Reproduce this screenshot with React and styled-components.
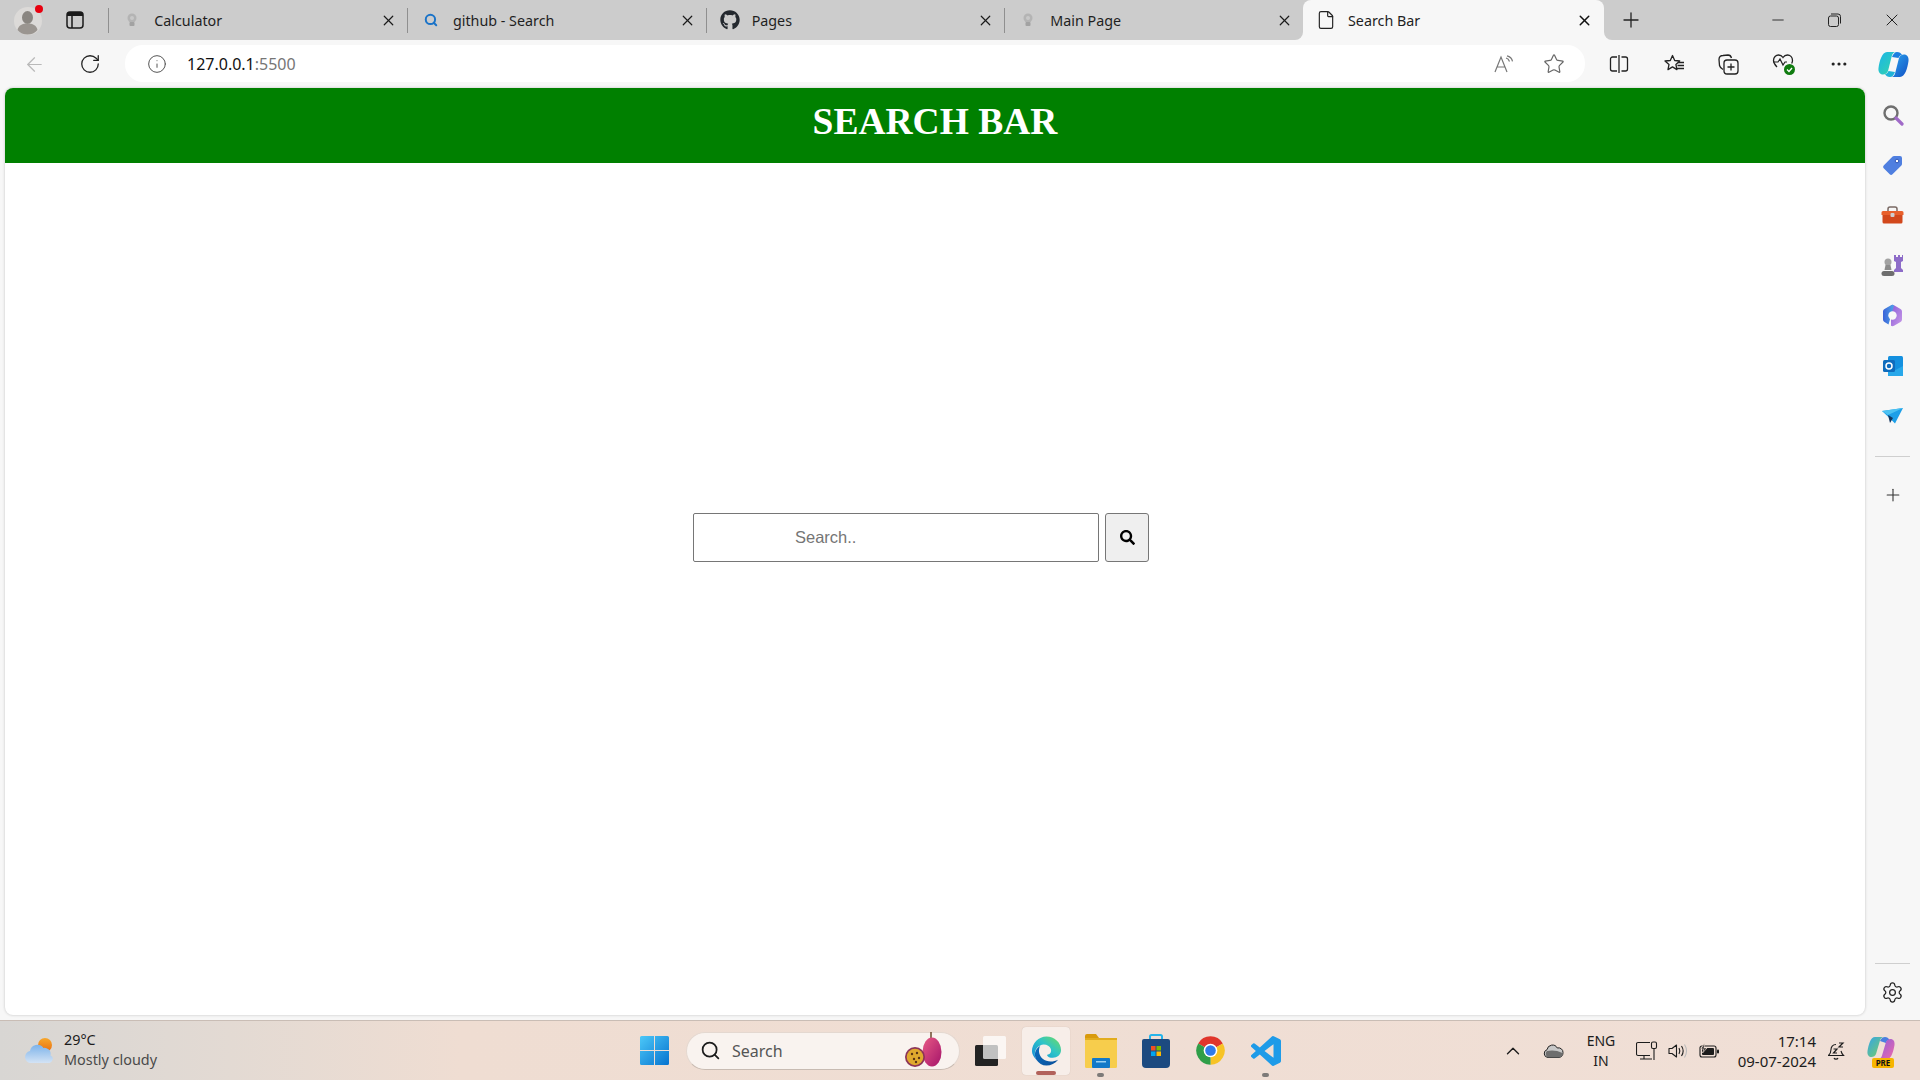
import React from 'react'
import styled, { createGlobalStyle } from 'styled-components'
import { X, Plus, Minus, ArrowLeft, RotateCw, Info, Star, File, Search, Settings, ChevronUp, Ellipsis } from 'lucide-react'
import { FaSearch, FaGithub } from 'react-icons/fa'

const GlobalStyle = createGlobalStyle`
  html, body { margin: 0; padding: 0; }
  body { font-family: "Noto Sans", "Open Sans", sans-serif; background: #f7f7f7; overflow: hidden; }
  * { box-sizing: border-box; }
`

const TABS = [
  { title: 'Calculator', icon: 'bulb' },
  { title: 'github - Search', icon: 'search' },
  { title: 'Pages', icon: 'github' },
  { title: 'Main Page', icon: 'bulb' },
]

const BulbIcon = () => (
  <svg width="10" height="14" viewBox="0 0 10 14">
    <circle cx="5" cy="5" r="4.5" fill="#b4b4b4" />
    <rect x="2.5" y="9" width="5" height="4" rx="1" fill="#a2a2a2" />
    <circle cx="5" cy="5" r="2" fill="#c8c8c8" />
  </svg>
)

const Avatar = () => (
  <svg width="32" height="34" viewBox="0 0 32 34">
    <circle cx="16" cy="18" r="14" fill="#dcdad8" />
    <ellipse cx="15.5" cy="14.5" rx="5.5" ry="6.5" fill="#8a8681" />
    <path d="M5.5 27c1-5 5-6.500 10-6.500s9 1.500 10 6.500c-2.500 3-6 4.500-10 4.500s-7.500-1.500-10-4.500z" fill="#9a9590" />
    <circle cx="27" cy="6" r="4" fill="#e8000f" />
  </svg>
)

const TabsIcon = () => (
  <svg width="18" height="18" viewBox="0 0 18 18" fill="none">
    <rect x="1" y="1" width="16" height="16" rx="3" stroke="#1a1a1a" strokeWidth="1.5" />
    <path d="M1 5V4a3 3 0 0 1 3-3h10a3 3 0 0 1 3 3v1z" fill="#1a1a1a" />
    <path d="M6 5v12" stroke="#1a1a1a" strokeWidth="1.5" />
  </svg>
)

const RestoreIcon = () => (
  <svg width="13" height="14" viewBox="0 0 13 14" fill="none" stroke="#222" strokeWidth="1">
    <rect x="0.5" y="3" width="10" height="10.5" rx="2" />
    <path d="M3 1h7a2.5 2.5 0 0 1 2.5 2.5v7" />
  </svg>
)

const ReadAloudIcon = () => (
  <svg width="20" height="18" viewBox="0 0 20 18" fill="none" stroke="#777" strokeWidth="1.2">
    <path d="M1 17L7 2l6 15M3.500 12h7" />
    <path d="M12 3c2 .5 3 2 3.500 3.500M13 .8c3 .7 5 3 5.500 5.500" />
  </svg>
)

const SplitIcon = () => (
  <svg width="20" height="20" viewBox="0 0 20 20" fill="none" stroke="#222" strokeWidth="1.3">
    <path d="M8 3H3.500A2 2 0 0 0 1.500 5v10a2 2 0 0 0 2 2H8M12.500 3H16.500a2 2 0 0 1 2 2v10a2 2 0 0 1-2 2h-4M10 1v18" />
  </svg>
)

const FavoritesIcon = () => (
  <svg width="21" height="20" viewBox="0 0 21 20" fill="none" stroke="#222" strokeWidth="1.3">
    <path d="M8.500 1.500l2.200 5 5 .5-3.800 3.400 1 5.200-4.400-2.700L4 15.600l1-5.200L1 7l5.300-.5z" strokeLinejoin="round" />
    <path d="M14 8.500h6M13.500 11.500h6.500M13 14.500h7" />
  </svg>
)

const CollectionsIcon = () => (
  <svg width="21" height="21" viewBox="0 0 21 21" fill="none" stroke="#222" strokeWidth="1.3">
    <path d="M5 15.500C3 14.500 2 13.500 1.500 11.500L1 5.500C1 3 2.500 1.500 5 1.500L10 1c2 0 3 1 3.500 3" />
    <rect x="6" y="6" width="14" height="14" rx="3" />
    <path d="M13 9.500v7M9.500 13h7" />
  </svg>
)

const HealthIcon = () => (
  <svg width="24" height="23" viewBox="0 0 24 23" fill="none">
    <path d="M5 14C2.500 11.500 1.500 9.500 1.500 7.500 1.500 4 4 2 6.500 2c2 0 3.500 1 4.500 2.500C12 3 13.500 2 15.500 2 18 2 20.500 4 20.500 7.500c0 1-.3 2-.8 3" stroke="#222" strokeWidth="1.3" />
    <path d="M1.500 9H6l2-3 3 6 2-3h2" stroke="#222" strokeWidth="1.2" />
    <circle cx="17.5" cy="16.5" r="5.5" fill="#107c10" />
    <path d="M15 16.500l2 2 3-3.500" stroke="#fff" strokeWidth="1.3" />
  </svg>
)

const CopilotMark = () => (
  <svg width="31" height="27" viewBox="0 0 31 27">
    <defs>
      <linearGradient id="cpA" x1="0" y1="0" x2="1" y2="1">
        <stop offset="0" stopColor="#1bb5e8" />
        <stop offset="1" stopColor="#35d6a8" />
      </linearGradient>
      <linearGradient id="cpB" x1="0" y1="0" x2="1" y2="1">
        <stop offset="0" stopColor="#2aa7f0" />
        <stop offset="1" stopColor="#1350c4" />
      </linearGradient>
    </defs>
    <path d="M14 6c1-3 3-5 5-5 2.500 0 4 1 5 3-2 0-3 1.500-3.500 3z" fill="#1b7fe0" />
    <path d="M17 21c-1 3-3 5-5 5-2.500 0-4-1-5-3 2 0 3-1.500 3.500-3z" fill="#1fb2d8" />
    <path d="M9 1h9c-2 0-3.500 1.500-4.200 4L10 20c-.7 2-2.500 3.500-5 3.500C2 23.500 0 21 .5 17 1.500 10 4 1 9 1z" fill="url(#cpA)" />
    <path d="M22 26h-9c2 0 3.500-1.500 4.200-4L21 7c.7-2 2.500-3.500 5-3.500 3 0 5 2.500 4.500 6.500C29.500 17 27 26 22 26z" fill="url(#cpB)" />
  </svg>
)

const MagnifierIcon = () => (
  <svg width="22" height="22" viewBox="0 0 22 22" fill="none">
    <circle cx="9" cy="9" r="6.5" stroke="#6f6f6f" strokeWidth="2.4" />
    <path d="M14 14l6 6" stroke="#a06ac8" strokeWidth="3.2" strokeLinecap="round" />
  </svg>
)

const TagIcon = () => (
  <svg width="21" height="21" viewBox="0 0 21 21">
    <path d="M12 1h6a2 2 0 0 1 2 2v6a2 2 0 0 1-.6 1.400L10.500 19.300a2 2 0 0 1-2.800 0L1.700 13.300a2 2 0 0 1 0-2.800L10.600 1.600A2 2 0 0 1 12 1z" fill="#4f7fe0" />
    <circle cx="15" cy="6" r="1.8" fill="#fff" stroke="#2f55b5" />
  </svg>
)

const ToolboxIcon = () => (
  <svg width="23" height="18" viewBox="0 0 23 18">
    <path d="M7 5V3a2 2 0 0 1 2-2h5a2 2 0 0 1 2 2v2" fill="none" stroke="#7a6a64" strokeWidth="1.5" />
    <path d="M2 5h19a1.500 1.500 0 0 1 1.500 1.500V9H.5V6.500A1.500 1.500 0 0 1 2 5z" fill="#e8602c" />
    <path d="M1.500 9h20v7a1.500 1.500 0 0 1-1.500 1.500H3A1.500 1.500 0 0 1 1.500 16z" fill="#d2481c" />
    <rect x="9.5" y="7" width="4" height="4" rx="1" fill="#cfcfcf" />
  </svg>
)

const ChessIcon = () => (
  <svg width="23" height="23" viewBox="0 0 23 23">
    <path d="M14 1h2v2h2V1h2v2h2v-2h1v6l-2 1v6l2 2v2h-9v-2l2-2V8l-2-1z" fill="#8d6cc8" transform="translate(-1 0)" />
    <circle cx="7" cy="8" r="3.5" fill="#a2a2a2" />
    <path d="M4.500 11h5l1 5h-7z" fill="#8b8b8b" />
    <rect x="0.5" y="17" width="13" height="5" rx="2.5" fill="#6e6e6e" />
  </svg>
)

const M365Icon = () => (
  <svg width="21" height="23" viewBox="0 0 21 23">
    <defs>
      <linearGradient id="msA" x1="0" y1="0" x2="1" y2="0">
        <stop offset="0" stopColor="#3b62d8" />
        <stop offset="1" stopColor="#4fa3e8" />
      </linearGradient>
      <linearGradient id="msB" x1="0" y1="0" x2="1" y2="1">
        <stop offset="0" stopColor="#8a5cd8" />
        <stop offset="1" stopColor="#c99ae8" />
      </linearGradient>
    </defs>
    <path d="M9 1.200a3 3 0 0 1 3 0l6.500 3.700A3 3 0 0 1 20 7.500v8a3 3 0 0 1-1.500 2.600L12 21.800a3 3 0 0 1-3 0" fill="url(#msB)" />
    <path d="M12 1.200a3 3 0 0 0-3 0L2.500 4.900A3 3 0 0 0 1 7.500v8a3 3 0 0 0 1.500 2.600l4 2.300z" fill="url(#msA)" />
    <circle cx="10.5" cy="11.5" r="4.2" fill="#f7f7f7" />
  </svg>
)

const OutlookIcon = () => (
  <svg width="20" height="20" viewBox="0 0 20 20">
    <rect x="5" y="0" width="15" height="20" rx="1.5" fill="#1490df" />
    <path d="M5 10l7.500 4 7.500-4v10H5z" fill="#28a8ea" />
    <rect x="0" y="4" width="12" height="12" rx="1.5" fill="#0f6cbd" />
    <circle cx="6" cy="10" r="3" fill="none" stroke="#fff" strokeWidth="1.5" />
  </svg>
)

const PlaneIcon = () => (
  <svg width="22" height="16" viewBox="0 0 22 16">
    <path d="M0 3l21-3-8 15.500-5-5z" fill="#1d9fe8" />
    <path d="M0 3l6 4 15-7z" fill="#4cc2f2" />
    <path d="M6 7l2 8 3-5z" fill="#12365f" />
  </svg>
)

const WeatherIcon = () => (
  <svg width="32" height="28" viewBox="0 0 32 28">
    <defs>
      <linearGradient id="wCloud" x1="0" y1="0" x2="0" y2="1">
        <stop offset="0" stopColor="#7db3ea" />
        <stop offset="1" stopColor="#d3e3f5" />
      </linearGradient>
      <linearGradient id="wSun" x1="0" y1="0" x2="0" y2="1">
        <stop offset="0" stopColor="#f7a72b" />
        <stop offset="1" stopColor="#e96e10" />
      </linearGradient>
    </defs>
    <circle cx="21" cy="8" r="7" fill="url(#wSun)" />
    <path d="M7 26a6 6 0 0 1-1-11.900A7.500 7.500 0 0 1 19.500 11a6 6 0 0 1 7 7.500c2.500 1 3 3.500 1.500 5.500-1 1.500-2 2-4 2z" fill="url(#wCloud)" />
  </svg>
)

const WindowsLogo = () => (
  <WindowsWrap>
    <svg width="29" height="29" viewBox="0 0 29 29">
      <defs>
        <linearGradient id="winG" x1="0" y1="0" x2="1" y2="1">
          <stop offset="0" stopColor="#4cc8f8" />
          <stop offset="1" stopColor="#0673cf" />
        </linearGradient>
      </defs>
      <path d="M0 1.500A1.500 1.500 0 0 1 1.500 0H14v14H0zM15 0h12.500A1.500 1.500 0 0 1 29 1.500V14H15zM0 15h14v14H1.500A1.500 1.500 0 0 1 0 27.500zM15 15h14v12.500a1.500 1.500 0 0 1-1.500 1.500H15z" fill="url(#winG)" />
    </svg>
  </WindowsWrap>
)

const FruitIcon = () => (
  <svg width="40" height="38" viewBox="0 0 40 38">
    <defs>
      <linearGradient id="frA" x1="0" y1="0" x2="1" y2="1">
        <stop offset="0" stopColor="#e85a85" />
        <stop offset="1" stopColor="#a5146a" />
      </linearGradient>
    </defs>
    <path d="M27 0v8" stroke="#6b4a2c" strokeWidth="1.5" />
    <ellipse cx="28" cy="20" rx="9.5" ry="14.5" fill="url(#frA)" />
    <circle cx="11" cy="25" r="10" fill="#8c3458" />
    <circle cx="11" cy="25" r="8.3" fill="#e0a92e" />
    <circle cx="8" cy="22" r="1.2" fill="#5b3414" />
    <circle cx="13" cy="21" r="1.2" fill="#5b3414" />
    <circle cx="15" cy="26" r="1.2" fill="#5b3414" />
    <circle cx="10" cy="27" r="1.2" fill="#5b3414" />
    <circle cx="12" cy="30" r="1.2" fill="#5b3414" />
  </svg>
)

const TaskViewIcon = () => (
  <svg width="31" height="30" viewBox="0 0 31 30">
    <rect x="0" y="9" width="23" height="21" rx="1.5" fill="#232323" />
    <rect x="8" y="0" width="23" height="23" rx="1.5" fill="#fff" fillOpacity="0.72" />
  </svg>
)

const EdgeIcon = () => (
  <svg width="31" height="32" viewBox="0 0 32 32">
    <defs>
      <linearGradient id="edA" x1="0" y1="1" x2="1" y2="0">
        <stop offset="0" stopColor="#0f88d8" />
        <stop offset="0.55" stopColor="#2fc4c8" />
        <stop offset="1" stopColor="#6fdc5e" />
      </linearGradient>
      <linearGradient id="edB" x1="0" y1="0" x2="1" y2="1">
        <stop offset="0" stopColor="#0b6fc0" />
        <stop offset="1" stopColor="#0a4f9a" />
      </linearGradient>
    </defs>
    <path d="M16 1c8 0 15 6 15 14 0 5-4 8-8.500 8-3 0-5.500-1-6-3 3-.5 5-2.500 4-6-1.500-4-7-6-11.500-3.500C4 13 2.500 19 5.500 25 2.500 22 1 19 1 16 1 8 8 1 16 1z" fill="url(#edA)" />
    <path d="M5.500 25C2.500 19 4.500 13.500 9.500 10.800 7.500 14 7.500 20 12 24c4.500 3.800 11 3.500 16 1-3 4-7.500 6-12 6-4.500 0-8-2.500-10.500-6z" fill="url(#edB)" />
  </svg>
)

const ExplorerIcon = () => (
  <svg width="32" height="34" viewBox="0 0 32 34">
    <path d="M0 2a2 2 0 0 1 2-2h9l3 4h-14z" fill="#d99a0c" />
    <rect x="0" y="4" width="32" height="30" rx="1.5" fill="#f7cd4c" />
    <rect x="0" y="4" width="32" height="2" fill="#e2ac1d" />
    <rect x="7" y="24" width="18" height="10" rx="1" fill="#1279c8" />
    <rect x="11" y="27" width="10" height="1.5" fill="#9ad1f2" />
  </svg>
)

const StoreIcon = () => (
  <svg width="28" height="34" viewBox="0 0 28 34">
    <path d="M8 6V2.500A1.500 1.500 0 0 1 9.500 1h9A1.500 1.500 0 0 1 20 2.500V6" fill="none" stroke="#25b4ea" strokeWidth="2" />
    <path d="M0 7a2 2 0 0 1 2-2h24a2 2 0 0 1 2 2v23a4 4 0 0 1-4 4H4a4 4 0 0 1-4-4z" fill="#1c4a80" />
    <rect x="9" y="12" width="4.5" height="4.5" fill="#f25022" />
    <rect x="14.5" y="12" width="4.5" height="4.5" fill="#7fba00" />
    <rect x="9" y="17.5" width="4.5" height="4.5" fill="#00a4ef" />
    <rect x="14.5" y="17.5" width="4.5" height="4.5" fill="#ffb900" />
  </svg>
)

const ChromeIcon = () => (
  <svg width="31" height="31" viewBox="0 0 24 24">
    <path d="M12 12L2.470 6.500A11 11 0 0 1 21.530 6.500z" fill="#e0352b" />
    <path d="M12 12L21.530 6.500A11 11 0 0 1 12 23z" fill="#f7c325" />
    <path d="M12 12L12 23A11 11 0 0 1 2.470 6.500z" fill="#2f9e48" />
    <circle cx="12" cy="12" r="5.3" fill="#fff" />
    <circle cx="12" cy="12" r="4.1" fill="#2f7bea" />
  </svg>
)

const VsCodeIcon = () => (
  <svg width="30" height="30" viewBox="0 0 24 24">
    <path d="M23.150 2.587L18.210.21a1.494 1.494 0 0 0-1.705.29l-9.460 8.630-4.120-3.128a.999.999 0 0 0-1.276.057L.327 7.261A1 1 0 0 0 .326 8.740L3.899 12 .326 15.260a1 1 0 0 0 .001 1.479L1.650 17.940a.999.999 0 0 0 1.276.057l4.120-3.128 9.460 8.630a1.492 1.492 0 0 0 1.704.29l4.942-2.377A1.500 1.500 0 0 0 24 20.060V3.939a1.500 1.500 0 0 0-.850-1.352zm-5.146 14.861L10.826 12l7.178-5.448v10.896z" fill="#1e9be8" />
  </svg>
)

const OneDriveIcon = () => (
  <svg width="21" height="15" viewBox="0 0 21 15">
    <path d="M5 14.500A4 4 0 0 1 4 6.700 5.500 5.500 0 0 1 14.300 5 4.500 4.500 0 0 1 20 9.500a5 5 0 0 1-4 5z" fill="#c8c8c8" stroke="#222" strokeWidth="1" />
    <path d="M5 14.500A4 4 0 0 1 4 8c4-1 10-1 15.500 2 .5 2-1 4.500-3.500 4.500z" fill="#6e6e6e" />
  </svg>
)

const MonitorIcon = () => (
  <svg width="22" height="20" viewBox="0 0 22 20" fill="none" stroke="#1c1c1c" strokeWidth="1.1">
    <path d="M14 1.500H2A1.500 1.500 0 0 0 .5 3v10A1.500 1.500 0 0 0 2 14.500h12M8 14.500v3M4 18h12" />
    <rect x="15.5" y="1" width="5" height="6.5" rx="1.5" />
    <path d="M18 7.500V19" />
  </svg>
)

const SpeakerIcon = () => (
  <svg width="20" height="16" viewBox="0 0 20 16" fill="none" stroke="#1c1c1c" strokeWidth="1.1">
    <path d="M1 5.500h3L8.500 2v12L4 10.500H1z" strokeLinejoin="round" />
    <path d="M11 5c1 1.800 1 4.200 0 6" />
    <path d="M13.500 3c2 3 2 7 0 10" />
    <path d="M16.500 1.500c2.500 4 2.500 9 0 13" stroke="#bbb" />
  </svg>
)

const BatteryIcon = () => (
  <svg width="20" height="16" viewBox="0 0 20 16">
    <rect x="1" y="3" width="16" height="11" rx="2" fill="none" stroke="#1c1c1c" strokeWidth="1.1" />
    <rect x="3" y="5" width="12" height="7" rx="1" fill="#1c1c1c" />
    <rect x="18" y="6.500" width="2" height="4" rx="1" fill="#1c1c1c" />
    <path d="M5.500 0L2 6h3l-1.500 4L8 5H5z" fill="#1c1c1c" stroke="#f0dfd6" strokeWidth="0.7" />
  </svg>
)

const BellIcon = () => (
  <svg width="17" height="20" viewBox="0 0 17 20" fill="none" stroke="#1c1c1c" strokeWidth="1.1">
    <path d="M8 3.500C4.500 3.500 3 6 3 8.500c0 3-1.500 5-2.500 6h15c-1-1-2-2.500-2.500-4.500" />
    <path d="M6 17c.5 1.500 3.500 1.500 4 0" />
    <path d="M5.500 8h3.500l-3.500 4h3.500M11 2h4l-4 4h4" strokeWidth="1.2" />
  </svg>
)

const CopilotPre = () => (
  <PreWrap>
    <svg width="28" height="24" viewBox="0 0 28 24">
      <defs>
        <linearGradient id="preA" x1="0" y1="0" x2="1" y2="1">
          <stop offset="0" stopColor="#33a5e8" />
          <stop offset="1" stopColor="#7cd05e" />
        </linearGradient>
        <linearGradient id="preB" x1="0" y1="0" x2="1" y2="1">
          <stop offset="0" stopColor="#8a5ce0" />
          <stop offset="1" stopColor="#f06aa8" />
        </linearGradient>
      </defs>
      <path d="M13 5c1-2.500 3-4 5-4 2 0 3.500 1 4.500 3-2 0-3 1-3.500 3z" fill="#4a7fe0" />
      <path d="M8 1h9c-2 0-3.500 1.500-4 3.500L9 18c-.7 2-2.500 3-4.500 3C2 21 0 19 .5 15 1.500 9 3.500 1 8 1z" fill="url(#preA)" />
      <path d="M20 23h-9c2 0 3.500-1.500 4-3.500L19 6c.7-2 2.500-3 4.500-3 2.500 0 4.500 2 4 6-1 6-3 14-7.500 14z" fill="url(#preB)" />
    </svg>
    <PreTag>PRE</PreTag>
  </PreWrap>
)

const App = () => {
  return (
    <Page>
      <GlobalStyle />

      <TabStrip>
        <StripLeft>
          <Slot $w={40}><Avatar /></Slot>
          <TabActions><TabsIcon /></TabActions>
          {TABS.map((tab) => (
            <Tab key={tab.title}>
              <TabDivider />
              <Favicon>
                {tab.icon === 'bulb' && <BulbIcon />}
                {tab.icon === 'search' && <Search size={14} color="#1a73c8" strokeWidth={3.4} />}
                {tab.icon === 'github' && <FaGithub size={20} color="#24292f" />}
              </Favicon>
              <TabTitle>{tab.title}</TabTitle>
              <X size={17} color="#1a1a1a" strokeWidth={1.7} />
            </Tab>
          ))}
        </StripLeft>
        <ActiveTab>
          <Favicon><File size={20} color="#222" strokeWidth={1.4} /></Favicon>
          <TabTitle>Search Bar</TabTitle>
          <X size={17} color="#111" strokeWidth={2.1} />
        </ActiveTab>
        <StripRight>
          <NewTab><Plus size={24} color="#222" strokeWidth={1.3} /></NewTab>
          <WindowControls>
            <Slot $w={57}><Minus size={18} color="#222" strokeWidth={1.2} /></Slot>
            <Slot $w={57}><RestoreIcon /></Slot>
            <Slot $w={57}><X size={20} color="#222" strokeWidth={1.2} /></Slot>
          </WindowControls>
        </StripRight>
      </TabStrip>

      <Toolbar>
        <Slot $w={55}><ArrowLeft size={23} color="#b9b9b9" strokeWidth={1.3} /></Slot>
        <Slot $w={55}><RotateCw size={22} color="#222" strokeWidth={1.4} /></Slot>
        <AddressBar>
          <Info size={20} color="#555" strokeWidth={1.2} />
          <Url>127.0.0.1<UrlPort>:5500</UrlPort></Url>
          <Slot $w={50}><ReadAloudIcon /></Slot>
          <Slot $w={50}><Star size={22} color="#666" strokeWidth={1.3} /></Slot>
        </AddressBar>
        <ToolbarIcons>
          <Slot $w={54.8}><SplitIcon /></Slot>
          <Slot $w={54.8}><FavoritesIcon /></Slot>
          <Slot $w={54.8}><CollectionsIcon /></Slot>
          <Slot $w={54.8}><HealthIcon /></Slot>
          <Slot $w={54.8}><Ellipsis size={20} color="#222" strokeWidth={1.8} /></Slot>
          <Slot $w={54.8}><CopilotMark /></Slot>
        </ToolbarIcons>
      </Toolbar>

      <Middle>
        <Content>
          <Header><Title>SEARCH BAR</Title></Header>
          <SearchRow>
            <SearchInput type="text" placeholder="Search.." />
            <SearchButton type="button"><FaSearch size={15} color="#000" /></SearchButton>
          </SearchRow>
        </Content>
        <Sidebar>
          <SideItem><MagnifierIcon /></SideItem>
          <SideItem><TagIcon /></SideItem>
          <SideItem><ToolboxIcon /></SideItem>
          <SideItem><ChessIcon /></SideItem>
          <SideItem><M365Icon /></SideItem>
          <SideItem><OutlookIcon /></SideItem>
          <SideItem><PlaneIcon /></SideItem>
          <SideDivider />
          <SideAdd><Plus size={20} color="#333" strokeWidth={1.3} /></SideAdd>
          <SideBottom>
            <SideDivider />
            <SideSettings><Settings size={23} color="#222" strokeWidth={1.3} /></SideSettings>
          </SideBottom>
        </Sidebar>
      </Middle>

      <Taskbar>
        <Weather>
          <WeatherIcon />
          <WeatherText>
            <span>29°C</span>
            <WeatherSub>Mostly cloudy</WeatherSub>
          </WeatherText>
        </Weather>
        <WindowsLogo />
        <TaskSearch>
          <Search size={21} color="#1c1c1c" strokeWidth={2} />
          <TaskSearchLabel>Search</TaskSearchLabel>
          <FruitIcon />
        </TaskSearch>
        <TaskView><TaskViewIcon /></TaskView>
        <EdgeTile><EdgeIcon /><ActiveBar /></EdgeTile>
        <AppSlot><ExplorerIcon /><OpenDot /></AppSlot>
        <AppSlot><StoreIcon /></AppSlot>
        <AppSlot><ChromeIcon /></AppSlot>
        <AppSlot><VsCodeIcon /><OpenDot /></AppSlot>
        <Tray>
          <Slot $w={46}><ChevronUp size={22} color="#1c1c1c" strokeWidth={1.5} /></Slot>
          <Slot $w={34}><OneDriveIcon /></Slot>
          <Lang><span>ENG</span><span>IN</span></Lang>
          <Slot $w={31}><MonitorIcon /></Slot>
          <Slot $w={31}><SpeakerIcon /></Slot>
          <Slot $w={31}><BatteryIcon /></Slot>
          <Clock><span>17:14</span><span>09-07-2024</span></Clock>
          <Slot $w={40}><BellIcon /></Slot>
          <Slot $w={50}><CopilotPre /></Slot>
        </Tray>
      </Taskbar>
    </Page>
  )
}

export default App

const Page = styled.div`
  width: 1920px;
  height: 1080px;
  display: flex;
  flex-direction: column;
  background: #f7f7f7;
  overflow: hidden;
`

const Slot = styled.div`
  width: ${(p) => p.$w}px;
  height: 100%;
  flex: none;
  display: flex;
  align-items: center;
  justify-content: center;
`

const TabStrip = styled.div`
  height: 40px;
  flex: none;
  display: flex;
  background: linear-gradient(#cccccc 50%, #f7f7f7 50%);
`

const StripLeft = styled.div`
  width: 1303px;
  flex: none;
  display: flex;
  align-items: center;
  padding-left: 8px;
  background: #cccccc;
  border-bottom-right-radius: 8px;
`

const TabActions = styled.div`
  width: 54px;
  height: 100%;
  margin-right: 7px;
  display: flex;
  align-items: center;
  justify-content: center;
`

const Tab = styled.div`
  width: 298.7px;
  height: 100%;
  flex: none;
  display: flex;
  align-items: center;
  padding-right: 10px;
`

const TabDivider = styled.div`
  width: 1px;
  height: 25px;
  flex: none;
  background: #8f8f8f;
`

const Favicon = styled.div`
  width: 22px;
  margin-left: 12px;
  flex: none;
  display: flex;
  justify-content: center;
`

const TabTitle = styled.div`
  flex: 1;
  margin-left: 11px;
  font-size: 14.3px;
  color: #1f1f1f;
  white-space: nowrap;
`

const ActiveTab = styled.div`
  width: 301px;
  flex: none;
  display: flex;
  align-items: center;
  padding-right: 11px;
  background: #f7f7f7;
  border-radius: 8px 8px 0 0;
`

const StripRight = styled.div`
  flex: 1;
  display: flex;
  align-items: center;
  background: #cccccc;
  border-bottom-left-radius: 8px;
`

const NewTab = styled.div`
  width: 24px;
  margin-left: 15px;
  display: flex;
  justify-content: center;
`

const WindowControls = styled.div`
  height: 100%;
  margin-left: auto;
  display: flex;
`

const Toolbar = styled.div`
  height: 48px;
  flex: none;
  display: flex;
  align-items: center;
  padding-left: 7px;
`

const AddressBar = styled.div`
  width: 1460px;
  height: 37px;
  margin: 0 0 1px 8px;
  flex: none;
  display: flex;
  align-items: center;
  padding: 0 6px 0 22px;
  background: #fff;
  border-radius: 18px;
`

const Url = styled.div`
  flex: 1;
  margin-left: 20px;
  font-size: 16px;
  color: #111;
`

const UrlPort = styled.span`
  color: #767676;
`

const ToolbarIcons = styled.div`
  height: 100%;
  margin-left: 7px;
  display: flex;
`

const Middle = styled.div`
  height: 932px;
  flex: none;
  display: flex;
`

const Content = styled.div`
  width: 1860px;
  height: 927px;
  margin-left: 5px;
  flex: none;
  overflow: hidden;
  background: #fff;
  border-radius: 8px;
  box-shadow: 0 0 3px rgba(0, 0, 0, 0.22);
`

const Header = styled.div`
  height: 75px;
  padding-top: 11px;
  background: #008000;
`

const Title = styled.h1`
  margin: 0;
  font-family: "Liberation Serif", "Times New Roman", serif;
  font-size: 37.5px;
  line-height: 46px;
  font-weight: 700;
  color: #fff;
  text-align: center;
`

const SearchRow = styled.div`
  display: flex;
  justify-content: center;
  gap: 6px;
  padding: 350px 28px 0 0;
`

const SearchInput = styled.input`
  width: 406px;
  height: 49px;
  padding: 0 10px 0 101px;
  border: 1px solid #767676;
  border-radius: 2px;
  outline: none;
  font-family: "Liberation Sans", Arial, sans-serif;
  font-size: 16.5px;
  background: #fff;

  &::placeholder {
    color: #757575;
    opacity: 1;
  }
`

const SearchButton = styled.button`
  width: 44px;
  height: 49px;
  padding: 0;
  display: flex;
  align-items: center;
  justify-content: center;
  background: #efefef;
  border: 1px solid #767676;
  border-radius: 3px;
`

const Sidebar = styled.div`
  flex: 1;
  display: flex;
  flex-direction: column;
  align-items: center;
  padding: 2px 0 8px;
`

const SideItem = styled.div`
  height: 50.2px;
  flex: none;
  display: flex;
  align-items: center;
  justify-content: center;
`

const SideDivider = styled.div`
  width: 35px;
  height: 1px;
  margin-top: 15px;
  flex: none;
  background: #cfcfcf;
`

const SideAdd = styled.div`
  height: 40px;
  margin-top: 18px;
  display: flex;
  align-items: center;
`

const SideBottom = styled.div`
  margin-top: auto;
  display: flex;
  flex-direction: column;
  align-items: center;
`

const SideSettings = styled.div`
  height: 40px;
  margin-top: 8px;
  display: flex;
  align-items: center;
`

const Taskbar = styled.div`
  height: 60px;
  flex: none;
  display: flex;
  align-items: center;
  border-top: 1px solid #c9bdb5;
  background: linear-gradient(90deg, #d8d6d3 0%, #e3dad3 12%, #efddd2 24%, #f0dfd6 100%);
  font-size: 14px;
  color: #1c1c1c;
`

const Weather = styled.div`
  width: 640px;
  flex: none;
  display: flex;
  align-items: center;
  gap: 8px;
  padding-left: 24px;
`

const WeatherText = styled.div`
  display: flex;
  flex-direction: column;
  margin-top: -2px;
  font-size: 14.4px;
  line-height: 20px;
`

const WeatherSub = styled.span`
  color: #4a4a4a;
`

const WindowsWrap = styled.div`
  flex: none;
  display: flex;
`

const TaskSearch = styled.div`
  width: 274px;
  height: 38px;
  margin-left: 17px;
  flex: none;
  display: flex;
  align-items: center;
  padding: 0 15px 0 13px;
  background: #f9f3ef;
  border: 1px solid #e4d8d0;
  border-bottom-color: #c8bbb2;
  border-radius: 19px;
`

const TaskSearchLabel = styled.span`
  flex: 1;
  margin-left: 11px;
  font-size: 16px;
  color: #555;
`

const TaskView = styled.div`
  margin-left: 15px;
  flex: none;
  display: flex;
`

const EdgeTile = styled.div`
  position: relative;
  width: 48px;
  height: 48px;
  margin-left: 16px;
  flex: none;
  display: flex;
  align-items: center;
  justify-content: center;
  background: #f7eee9;
  border-radius: 4px;
  box-shadow: 0 0 1px rgba(0, 0, 0, 0.2);
`

const ActiveBar = styled.span`
  position: absolute;
  left: 14px;
  bottom: 0;
  width: 20px;
  height: 4px;
  background: #b2615a;
  border-radius: 2px;
`

const AppSlot = styled.div`
  position: relative;
  width: 55px;
  height: 100%;
  flex: none;
  display: flex;
  align-items: center;
  justify-content: center;

  ${EdgeTile} + & {
    margin-left: 3px;
  }
`

const OpenDot = styled.span`
  position: absolute;
  left: 24px;
  bottom: 3px;
  width: 7px;
  height: 4px;
  background: #7d7a78;
  border-radius: 2px;
`

const Tray = styled.div`
  height: 100%;
  margin-left: 197px;
  flex: none;
  display: flex;
  align-items: center;
`

const Lang = styled.div`
  width: 46px;
  margin: 0 7px 0 8px;
  flex: none;
  display: flex;
  flex-direction: column;
  align-items: center;
  font-size: 14px;
  line-height: 20px;
`

const Clock = styled.div`
  width: 92px;
  flex: none;
  display: flex;
  flex-direction: column;
  align-items: flex-end;
  font-size: 15px;
  line-height: 20px;
  white-space: nowrap;
`

const PreWrap = styled.div`
  position: relative;
  width: 28px;
  height: 30px;
`

const PreTag = styled.span`
  position: absolute;
  left: 5px;
  bottom: -2px;
  width: 22px;
  height: 10px;
  background: #f7b500;
  border-radius: 2px;
  font-size: 8px;
  line-height: 10px;
  font-weight: 700;
  text-align: center;
  color: #111;
`
